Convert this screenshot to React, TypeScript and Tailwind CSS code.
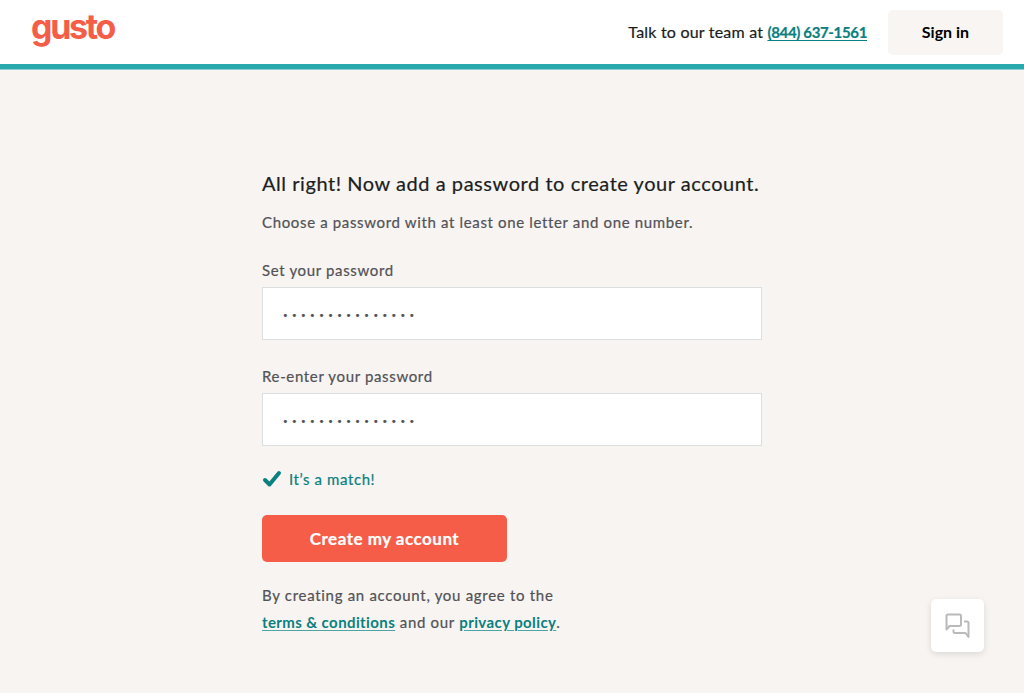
import type { ReactNode } from "react";

function Logo() {
    return (
        <a
            href="#"
            className="mb-[10px] block h-[48px] w-[90px] font-['Inter',sans-serif] text-[34px] leading-[48px] font-bold tracking-[-2.3px] whitespace-nowrap text-[#f45d48]"
        >
            gusto
        </a>
    );
}

function Header() {
    return (
        <header className="flex h-[70px] items-start border-b border-[#8ed0d1] bg-white">
            <div className="flex h-[69px] w-full items-center justify-between border-b-5 border-[#2aa9ad] pr-[21px] pl-[31px]">
                <Logo />
                <div className="flex items-center">
                    <p className="text-[16px] tracking-[0.2px] text-[#1c1c1c] [-webkit-text-stroke:0.2px]">
                        Talk to our team at{" "}
                        <a href="#" className="text-[15px] font-bold tracking-[-0.35px] text-[#0a8080] underline underline-offset-2">
                            (844) 637-1561
                        </a>
                    </p>
                    <button className="ml-[21px] h-[45px] w-[115px] rounded-[5px] bg-[#f8f5f2] text-[16px] font-bold text-black">
                        Sign in
                    </button>
                </div>
            </div>
        </header>
    );
}

function PasswordField({ id, label }: { id: string; label: string }) {
    return (
        <div>
            <label htmlFor={id} className="block h-[27px] text-[15px] leading-5 tracking-[0.65px]">
                {label}
            </label>
            <input
                id={id}
                type="password"
                defaultValue="correcthorse123"
                className="block h-[53px] w-[500px] border border-[#dcdfdf] bg-white px-[20px] pt-[3px] text-[8px] tracking-[4.4px] text-[#525257] outline-none"
            />
        </div>
    );
}

function TextLink({ children }: { children: ReactNode }) {
    return (
        <a
            href="#"
            className="font-bold tracking-[0.4px] text-[#0a8080] underline decoration-[#0a8080]/70 underline-offset-2 [-webkit-text-stroke:0]"
        >
            {children}
        </a>
    );
}

function ChatButton() {
    return (
        <button
            aria-label="Chat"
            className="fixed top-[599px] left-[931px] flex h-[53px] w-[53px] items-center justify-center rounded-[5px] bg-white shadow-[0_2px_6px_rgba(0,0,0,0.12)]"
        >
            <svg width="28" height="28" viewBox="0 0 28 28" fill="none" stroke="#bababa" strokeWidth="2" strokeLinejoin="round">
                <path d="M2.500 17.500V4Q2.500 2.500 4 2.500H15.500Q17 2.500 17 4V12.500Q17 14 15.500 14H5.500L2.500 17.500Z" />
                <path d="M20 9.500H23Q24.500 9.500 24.500 11V25L21.500 21H11Q9.500 21 9.500 19.500V17.500" />
            </svg>
        </button>
    );
}

export default function App() {
    return (
        <div className="h-[694px] overflow-hidden bg-white font-['Lato',sans-serif]">
            <Header />
            <main className="h-[623px] bg-[#f7f4f1] pt-[99px] text-[#525257] [-webkit-text-stroke:0.2px]">
                <div className="mx-auto w-[500px]">
                    <h1 className="text-[20px] leading-7 tracking-[0.55px] whitespace-nowrap text-[#1c1f1f]">
                        All right! Now add a password to create your account.
                    </h1>
                    <p className="mt-[15px] text-[15px] leading-5 tracking-[0.65px]">
                        Choose a password with at least one letter and one number.
                    </p>

                    <div className="mt-[28px] flex flex-col gap-[26px]">
                        <PasswordField id="password" label="Set your password" />
                        <PasswordField id="confirm" label="Re-enter your password" />
                    </div>

                    <div className="mt-[23px] flex items-center text-[#0a8080]">
                        <svg width="20" height="18" viewBox="0 0 20 18" fill="none" stroke="currentColor" strokeWidth="4" strokeLinecap="round" strokeLinejoin="round">
                            <path d="M3 10L7.500 14.500L17 3" />
                        </svg>
                        <span className="ml-[7px] text-[15px] leading-5 tracking-[0.6px]">It’s a match!</span>
                    </div>

                    <button className="mt-[26px] h-[47px] w-[245px] rounded-[5px] bg-[#f55d48] text-[17px] font-bold tracking-[0.5px] text-white">
                        Create my account
                    </button>

                    <p className="mt-[20px] text-[15px] leading-[27px] tracking-[0.7px]">
                        By creating an account, you agree to the
                        <br />
                        <TextLink>terms &amp; conditions</TextLink> and our <TextLink>privacy policy</TextLink>.
                    </p>
                </div>
            </main>
            <ChatButton />
        </div>
    );
}
